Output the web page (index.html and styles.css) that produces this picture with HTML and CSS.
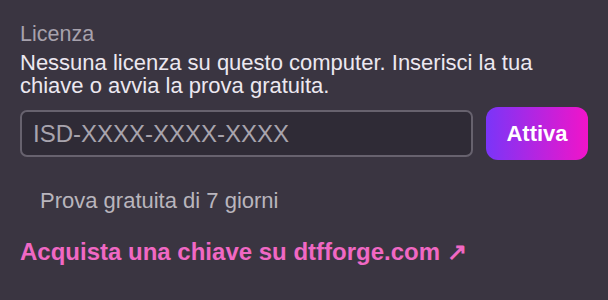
FILE: index.html
```html
<!DOCTYPE html>
<html lang="it">
<head>
  <meta charset="UTF-8">
  <meta name="viewport" content="width=device-width, initial-scale=1.0">
  <title>Licenza</title>
  <link rel="stylesheet" href="styles.css">
</head>
<body>
  <div class="license-panel">
    <div class="license-label">Licenza</div>
    <p class="license-desc">Nessuna licenza su questo computer. Inserisci la tua chiave o avvia la prova gratuita.</p>

    <div class="key-row">
      <input type="text" class="key-input" placeholder="ISD-XXXX-XXXX-XXXX">
      <button class="activate-button">Attiva</button>
    </div>

    <button class="trial-button">Prova gratuita di 7 giorni</button>

    <a class="buy-link" href="#">Acquista una chiave su dtfforge.com ↗</a>
  </div>
</body>
</html>
```

FILE: styles.css
```css
body {
  margin: 0;
  font-family: 'Liberation Sans', Arial, sans-serif;
  background-color: #3a3541;
  min-height: 100vh;
}

.license-panel {
  display: flex;
  flex-direction: column;
  align-items: flex-start;
  padding: 22px 20px 0 20px;
}

.license-label {
  font-size: 21.5px;
  line-height: 24px;
  color: #a7a2ad;
}

.license-desc {
  margin: 5px 0 0 0;
  font-size: 22px;
  line-height: 23px;
  color: #ece8f0;
  max-width: 545px;
}

.key-row {
  display: flex;
  align-items: center;
  gap: 13px;
  margin-top: 10px;
  width: 568px;
}

.key-input {
  flex: 1;
  min-width: 0;
  height: 47px;
  box-sizing: border-box;
  background-color: #2f2b36;
  border: 2px solid #67626e;
  border-radius: 7px;
  padding: 0 11px;
  font-family: 'Liberation Sans', Arial, sans-serif;
  font-size: 24px;
  color: #e8e4ec;
  outline: none;
}

.key-input::placeholder {
  color: #a8a4ad;
}

.activate-button {
  width: 102px;
  height: 53px;
  border: none;
  border-radius: 12px;
  background: linear-gradient(90deg, #7a35f8, #f114c9);
  color: #fff;
  font-family: 'Liberation Sans', Arial, sans-serif;
  font-weight: bold;
  font-size: 22px;
  cursor: pointer;
}

.trial-button {
  margin-top: 22px;
  background: none;
  border: none;
  padding: 6px 20px;
  font-family: 'Liberation Sans', Arial, sans-serif;
  font-size: 22px;
  color: #b9b5bd;
  cursor: pointer;
}

.buy-link {
  margin-top: 18px;
  font-size: 24px;
  font-weight: bold;
  color: #f068c4;
  text-decoration: none;
}
```
